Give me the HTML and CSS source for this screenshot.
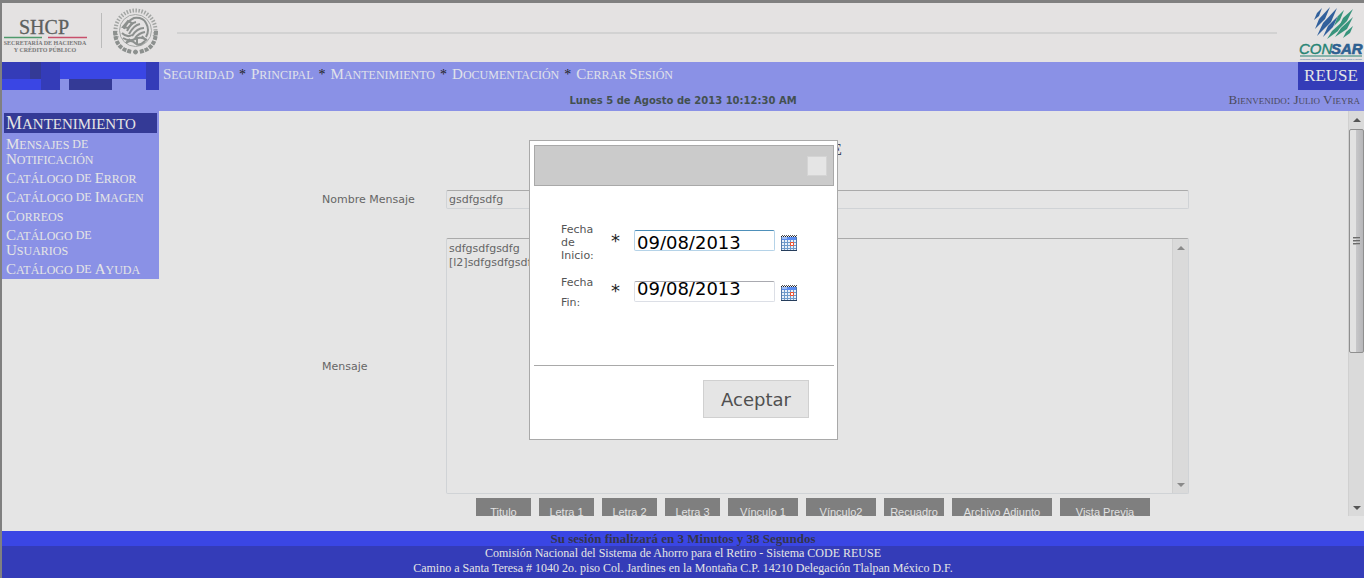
FILE: index.html
```html
<!DOCTYPE html>
<html lang="es">
<head>
<meta charset="utf-8">
<title>CODE REUSE</title>
<link rel="stylesheet" href="styles.css">
</head>
<body>
<div class="app">
  <header class="brand">
    <svg class="shcp" width="160" height="59" viewBox="2 3 160 59" role="img" aria-label="SHCP, Secretaría de Hacienda y Crédito Público">
      <text class="serif" x="19" y="34" font-size="20" fill="#5c605e" stroke="#5c605e" stroke-width=".3">SHCP</text>
      <path d="M4 37.500H42" stroke="#4f9a6c" stroke-width="1.500"/><path d="M48 37.500H87" stroke="#c8506c" stroke-width="1.500"/>
      <text class="serif" x="45" y="45" font-size="6" text-anchor="middle" font-weight="bold" fill="#777">SECRETARÍA DE HACIENDA</text>
      <text class="serif" x="45" y="52" font-size="6" text-anchor="middle" font-weight="bold" fill="#777">Y CRÉDITO PÚBLICO</text>
      <path d="M101.500 13V48" stroke="#bbb"/>
      <g fill="none" stroke="#8c908e">
        <path d="M117 38A20 20 0 1 1 154 38" stroke-width="4" stroke="#a2a5a3" stroke-dasharray="1.500 1.500"/>
        <circle cx="135.500" cy="30.500" r="16" stroke-width="1" stroke="#a5a8a6"/>
        <path d="M115 31q0 18 17 21M156 31q0 18-17 21" stroke-width="4" stroke-dasharray="4 1"/>
        <circle cx="135.500" cy="52" r="2" fill="#8c908e"/>
        <path d="M124 29q3-8 10-11 9-1 12 5 4 7 0 14" stroke-width="2"/>
        <path d="M127 31q4-8 9-9M129 34q5-9 11-10M132 36q5-8 12-8M135 38q4-5 10-6" stroke-width="2"/>
        <path d="M123 27l5-6 4 2-4 5zM122 33q5 5 10 2M123 38q6 4 12 1t12 1M126 43q5-4 9 0t10-2" stroke-width="2"/>
        <path d="M130 39l-4 4M137 37v8M142 36l4 5" stroke-width="2"/>
      </g>
    </svg>
    <div class="brand-line"></div>
    <svg class="consar" width="66" height="59" viewBox="1298 3 66 59" role="img" aria-label="CONSAR">
      <g fill="#31609c">
        <path d="M1322 8L1319 16 1314 20 1317 13z"/>
        <path d="M1330 7L1325 19 1315 29 1319 19z"/>
        <path d="M1337 8L1331 22 1317 36 1323 23z"/>
        <path d="M1338 16L1333 27 1323 37 1328 26z"/>
      </g>
      <g fill="#37947c">
        <path d="M1344 10L1340 20 1334 26 1338 16z"/>
        <path d="M1353 9L1347 21 1337 31 1343 18z"/>
        <path d="M1342 22L1338 31 1327 39 1332 31z"/>
        <path d="M1353 17L1347 29 1335 37 1341 28z"/>
        <path d="M1353 26L1350 33 1343 38 1346 32z"/>
      </g>
      <text class="sans" x="1299" y="54" font-size="15" font-style="italic" fill="#278474" stroke="#278474" stroke-width=".4">CON</text>
      <text class="sans" x="1331" y="54" font-size="15" font-weight="bold" font-style="italic" fill="#2d6091" stroke="#2d6091" stroke-width=".6">SAR</text>
      <path d="M1300 56H1362" stroke="#278474"/>
      <text class="sans" x="1331" y="60" font-size="2.500" text-anchor="middle" fill="#2d6091">Comisión Nacional del Sistema de Ahorro para el Retiro</text>
    </svg>
  </header>

  <div class="band">
    <svg class="blocks" width="157" height="28" viewBox="0 0 157 28" shape-rendering="crispEdges" aria-hidden="true">
      <path fill="#343cb8" d="M0 0h28v17H0zM39 0h19v28H39zM144 0h13v28h-13z"/>
      <path fill="#3a46e4" d="M58 0h86v17H58zM0 17h39v11H0z"/>
      <path fill="#343a96" d="M28 0h11v17H28zM67 17h43v11H67z"/>
    </svg>
    <nav class="menu caps" aria-label="Principal">
      <a href="#"><span>Seguridad</span></a><i>*</i><a href="#"><span>Principal</span></a><i>*</i><a href="#"><span>Mantenimiento</span></a><i>*</i><a href="#"><span>Documentación</span></a><i>*</i><a href="#"><span>Cerrar</span> <span>Sesión</span></a>
    </nav>
    <div class="reuse">REUSE</div>
    <div class="date">Lunes 5 de Agosto de 2013 10:12:30 AM</div>
    <div class="welcome">Bienvenido: Julio Vieyra</div>
  </div>

  <div class="main">
    <aside class="side caps">
      <h2><span>Mantenimiento</span></h2>
      <ul>
        <li><a href="#"><span>Mensajes</span> de <span>Notificación</span></a></li>
        <li><a href="#"><span>Catálogo</span> de <span>Error</span></a></li>
        <li><a href="#"><span>Catálogo</span> de <span>Imagen</span></a></li>
        <li><a href="#"><span>Correos</span></a></li>
        <li><a href="#"><span>Catálogo</span> de <span>Usuarios</span></a></li>
        <li><a href="#"><span>Catálogo</span> de <span>Ayuda</span></a></li>
      </ul>
    </aside>
    <main class="content">
      <h1>Mensajes CODE REUSE</h1>
      <form class="form">
        <label for="nombre">Nombre Mensaje</label>
        <input class="field" id="nombre" type="text" value="gsdfgsdfg">
        <label for="mensaje">Mensaje</label>
        <div class="area">
          <textarea id="mensaje">sdfgsdfgsdfg
[l2]sdfgsdfgsdfg</textarea>
          <div class="track muted" aria-hidden="true"><i class="up"></i><i class="down"></i></div>
        </div>
        <div class="tools">
          <button type="button" class="w55">Titulo</button>
          <button type="button" class="w55">Letra 1</button>
          <button type="button" class="w55">Letra 2</button>
          <button type="button" class="w55">Letra 3</button>
          <button type="button" class="w70">Vínculo 1</button>
          <button type="button" class="w70">Vínculo2</button>
          <button type="button" class="w60">Recuadro</button>
          <button type="button" class="w100">Archivo Adjunto</button>
          <button type="button" class="w90">Vista Previa</button>
        </div>
      </form>
    </main>
    <div class="track" aria-hidden="true"><i class="up"></i><div class="thumb"><b></b><b></b><b></b></div><i class="down"></i></div>
  </div>

  <footer class="foot">
    <p class="session">Su sesión finalizará en 3 Minutos y 38 Segundos</p>
    <p>Comisión Nacional del Sistema de Ahorro para el Retiro - Sistema CODE REUSE</p>
    <p>Camino a Santa Teresa # 1040 2o. piso Col. Jardines en la Montaña C.P. 14210 Delegación Tlalpan México D.F.</p>
  </footer>
</div>

<svg width="0" height="0" class="defs" aria-hidden="true">
  <symbol id="cal" viewBox="0 0 16 16">
    <path fill="#e8f0fa" d="M0 1h16v15H0z"/>
    <path fill="#5b8def" d="M0 2h16v3H0z"/><path fill="#9dbdf5" d="M1 2h5v2H1z"/>
    <path d="M0 1.500h16" stroke="#222" stroke-dasharray="1 1"/><path d="M1 .500h15" stroke="#555" stroke-dasharray="1 1"/>
    <path d="M0 7.500h16M0 10.500h16M0 13.500h16M3.500 5v10M6.500 5v10M9.500 5v10M12.500 5v10" stroke="#6d9acb" fill="none"/>
    <path d="M.500 2v13M15.500 2v13" stroke="#5478a8"/><path d="M0 15.500h16" stroke="#263d5c"/>
    <path d="M9.500 7.500h3v3h-3z" fill="#fff" stroke="#f0502c"/>
  </symbol>
</svg>

<div class="dialog" role="dialog" aria-label="Fechas">
  <div class="dialog-head"><button type="button" class="close" aria-label="Cerrar"></button></div>
  <div class="dates">
    <label for="inicio">Fecha de Inicio:</label><span class="req">*</span>
    <input id="inicio" class="focus" type="text" value="09/08/2013">
    <button type="button" class="cal" aria-label="Elegir fecha de inicio"><svg width="16" height="16"><use href="#cal"/></svg></button>
    <label for="fin" class="loose">Fecha Fin:</label><span class="req">*</span>
    <input id="fin" class="plain" type="text" value="09/08/2013">
    <button type="button" class="cal" aria-label="Elegir fecha fin"><svg width="16" height="16"><use href="#cal"/></svg></button>
  </div>
  <div class="dialog-foot"><button type="button" class="accept">Aceptar</button></div>
</div>
</body>
</html>
```

FILE: styles.css
```css
* { box-sizing: border-box; }
body { margin: 0; background: #fff; font-family: "DejaVu Sans", sans-serif; font-size: 11px; color: #666; }
h1, h2, p, ul { margin: 0; padding: 0; font-weight: normal; }
a { color: inherit; text-decoration: none; }
button, input, textarea { font: inherit; color: inherit; border-radius: 0; margin: 0; padding: 0; }
.serif { font-family: "Liberation Serif", serif; }
.sans { font-family: "Liberation Sans", sans-serif; }
.defs { position: absolute; }

/* Capitals with a larger initial on each word */
.caps { font-family: "Liberation Serif", serif; font-size: 12px; text-transform: uppercase; }
.caps span { display: inline-block; }
.caps span::first-letter { font-size: 15px; }

.app { display: flex; flex-direction: column; height: calc(100vh - 3px); margin-right: 1px; background: #e5e5e5; border-top: 3px solid #808080; border-left: 2px solid #808080; }

.brand { display: flex; align-items: center; height: 59px; background: #e4e2e2; }
.brand svg { flex: none; }
.brand-line { flex: 1; height: 2px; margin: 0 21px 0 15px; background: #d2d2d2; }

.band { display: grid; grid-template-columns: 157px 1fr auto 1fr auto; grid-template-rows: 28px 21px; background: #8a91e6; font-family: "Liberation Serif", serif; }
.menu { grid-column: 2 / 5; grid-row: 1; display: flex; gap: 5px; padding-left: 4px; line-height: 24px; color: #e0e2ea; white-space: nowrap; }
.menu i { color: #222; font-style: normal; font-size: 14px; line-height: 26px; }
.reuse { grid-column: 5; grid-row: 1; justify-self: end; width: 66px; background: #343cb8; color: #e5e5e5; font-size: 17px; line-height: 28px; text-align: center; }
.date { grid-column: 1 / 6; grid-row: 2; text-align: center; font: bold 10px/21px "DejaVu Sans", sans-serif; color: #435050; }
.welcome { grid-column: 4 / 6; grid-row: 2; justify-self: end; padding-right: 4px; font-size: 13px; line-height: 20px; font-variant: small-caps; color: #4a4a5c; }

.main { flex: 1; min-height: 0; display: flex; padding-bottom: 15px; overflow: hidden; }
.side { flex: none; align-self: flex-start; width: 157px; padding: 2px 2px 0; background: #8a91e6; color: #e5e5e5; }
.side h2 { padding-left: 2px; background: #343a96; font-size: 15px; line-height: 20px; height: 20px; margin-bottom: 2px; }
.side h2 span::first-letter { font-size: 18px; }
.side ul { list-style: none; }
.side li { padding: 2px 0 2px 2px; line-height: 15px; }
.side li span { height: 15px; vertical-align: top; }
.side li:nth-child(1) { padding-right: 20px; }
.side li:nth-child(5) { padding-right: 40px; }

.content { flex: 1; min-width: 0; overflow: hidden; padding: 27px 159px 0 163px; }
h1 { font-family: "Liberation Serif", serif; font-size: 17px; line-height: 24px; text-align: center; color: #24304c; margin-bottom: 28px; }
.form { display: grid; grid-template-columns: 124px 1fr; align-items: center; row-gap: 29px; }
.field, .area { border: 1px solid #d0d3d6; border-top-color: #aaa; border-radius: 2px; background: transparent; }
.field { width: 100%; height: 19px; padding: 0 2px; }
.area { display: flex; height: 256px; }
.area textarea { flex: 1; min-width: 0; border: 0; resize: none; background: transparent; padding: 3px 2px; line-height: 14px; outline: 0; overflow: hidden; }
.tools { grid-column: 2; display: flex; gap: 8px; margin-top: -25px; padding-left: 30px; }
.tools button { flex: none; height: 28px; border: 0; background: #7f7f7f; color: #e2e2e2; font: 11px/28px "Liberation Sans", sans-serif; white-space: nowrap; }
.w55 { width: 55px; }
.w60 { width: 60px; }
.w70 { width: 70px; }
.w90 { width: 90px; }
.w100 { width: 100px; }

.track { flex: none; display: flex; flex-direction: column; width: 16px; background: #dadada; border-left: 1px solid #d0d0d0; }
.track i { align-self: center; border: 4px solid transparent; }
.track .up { border-top: 0; border-bottom-color: #555; margin: 7px 0; }
.track .down { border-bottom: 0; border-top-color: #555; margin: auto 0 6px; }
.track.muted i { opacity: .6; }
.thumb { display: flex; flex-direction: column; justify-content: center; align-items: center; gap: 1px; height: 224px; border: 1px solid #8f8f8f; border-radius: 2px; background: linear-gradient(90deg, #e2e2e2 45%, #c6c6c8 50%, #b6b6b9); }
.thumb b { width: 7px; height: 2px; background: #6c6c6c; border-bottom: 1px solid #aaa; }

.foot { background: #343cb8; color: #e5e5e5; font: 12px/15px "Liberation Serif", serif; text-align: center; padding: 0 0 2px; }
.session { background: #3a46e4; color: #34344c; font-weight: bold; font-size: 13px; }

.dialog { position: absolute; inset: 0 0 1px 2px; margin: auto; width: 309px; height: fit-content; border: 1px solid #a9a9a9; background: #fff; padding: 4px 3px 21px 4px; color: #555; }
.dialog-head { display: flex; justify-content: flex-end; align-items: center; height: 41px; padding-right: 6px; border: 1px solid #a9a9a9; background: #cbcbcb; }
.close { width: 20px; height: 20px; border: 1px solid #d4d4d4; background: #e5e5e5; }
.dates { display: grid; grid-template-columns: 50px 23px 141px 16px; align-items: center; row-gap: 7px; padding: 33px 0 52px 27px; }
.dates label { padding: 4px 10px 0 0; line-height: 13px; }
.dates .loose { line-height: 20px; }
.req { font-size: 18px; line-height: 20px; color: #222; }
.dates input { width: 141px; height: 21px; border: 1px solid #dcdfe6; border-top-color: #a9aab0; border-radius: 2px; padding: 0 2px; font-size: 18px; color: #000; background: #fff; }
.dates .focus { border-color: #b5d3e8; border-top-color: #4e90ba; padding-top: 4px; }
.dates .plain { padding-bottom: 5px; }
.cal { margin: 4px 0 0 6px; width: 16px; height: 16px; border: 0; background: none; }
.cal svg { display: block; }
.dialog-foot { display: flex; justify-content: flex-end; padding: 14px 25px 0 0; border-top: 1px solid #a9a9a9; }
.accept { width: 106px; height: 38px; border: 1px solid #d0d0d0; background: #e5e5e5; font-size: 18px; color: #505050; }
```
